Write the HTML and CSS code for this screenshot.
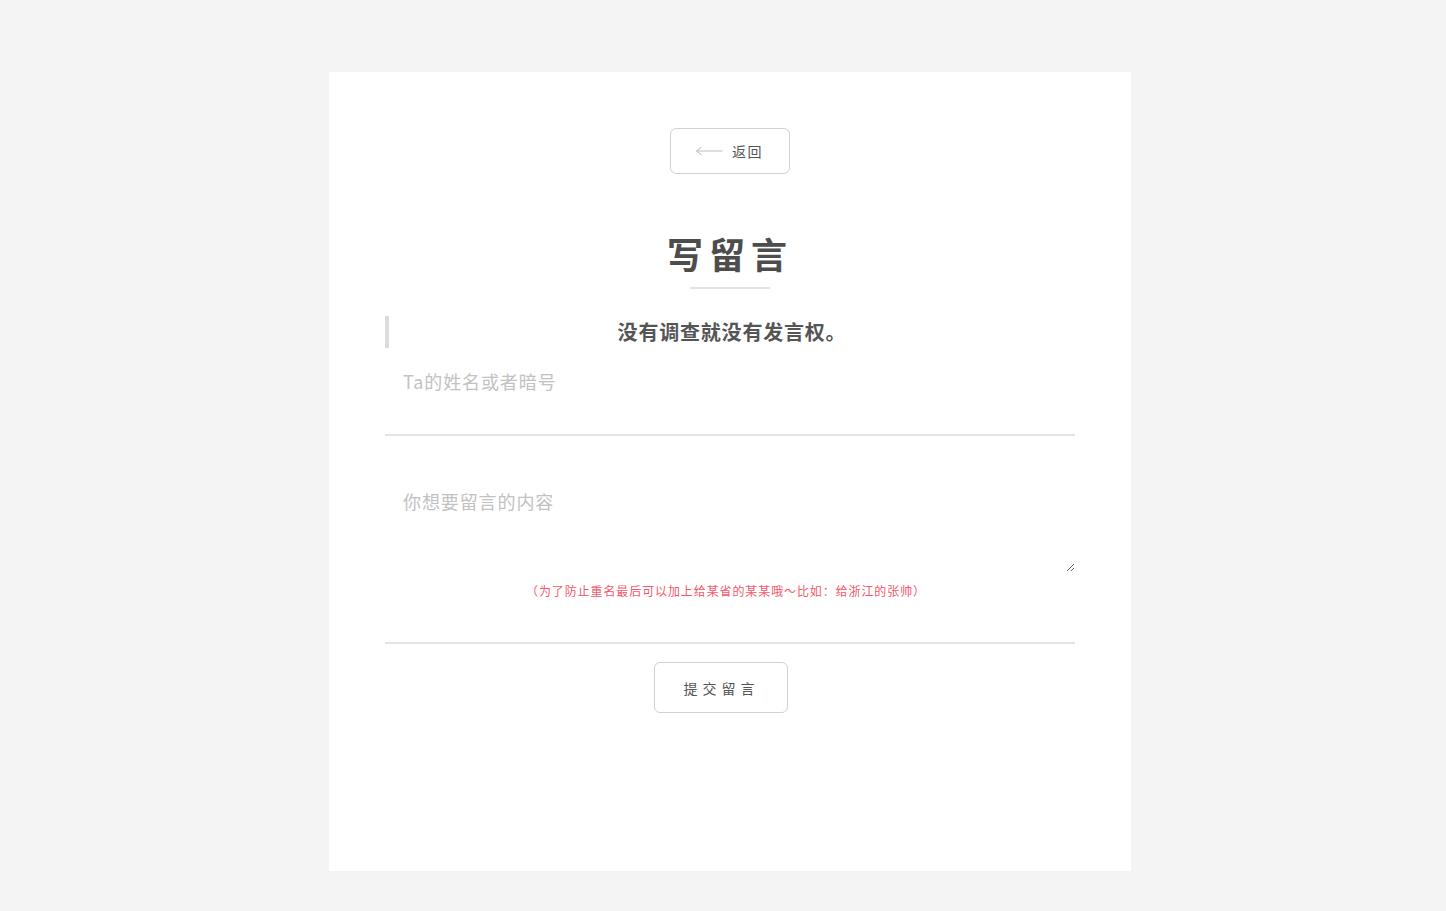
FILE: index.html
```html
<!DOCTYPE html>
<html lang="zh-CN">
<head>
<meta charset="utf-8">
<title>写留言</title>
<link rel="stylesheet" href="styles.css">
</head>
<body>
<div class="page">
  <div class="card">
    <div class="back-row">
      <a class="back-btn" href="#">
        <svg class="arrow" width="28" height="10" viewBox="0 0 28 10"><path d="M27.5 5H1.5M6.5 1.2L1.5 5L6.5 8.8" fill="none" stroke="#bdbdbd" stroke-width="1"/></svg>
        <span class="back-text">返回</span>
      </a>
    </div>
    <h1 class="title">写留言</h1>
    <div class="title-line"></div>
    <blockquote class="quote">没有调查就没有发言权。</blockquote>
    <form class="form">
      <input class="name-input" type="text" placeholder="Ta的姓名或者暗号">
      <div class="content-wrap">
        <textarea class="content-input" placeholder="你想要留言的内容"></textarea>
        <p class="hint">（为了防止重名最后可以加上给某省的某某哦～比如：给浙江的张帅）</p>
      </div>
      <div class="submit-row">
        <button class="submit-btn" type="button">提交留言</button>
      </div>
    </form>
  </div>
</div>
</body>
</html>
```
FILE: styles.css
```css
html, body {
  margin: 0;
  padding: 0;
  background: #f4f4f4;
  font-family: "Noto Sans CJK SC", "Noto Sans", sans-serif;
  color: #555;
}
.page {
  padding: 72px 0 0 329px;
}
.card {
  width: 802px;
  height: 799px;
  box-sizing: border-box;
  background: #fff;
  padding: 56px 56px 0 56px;
}
.back-row {
  display: flex;
  justify-content: center;
}
.back-btn {
  display: flex;
  align-items: center;
  justify-content: center;
  width: 120px;
  height: 46px;
  box-sizing: border-box;
  border: 1px solid #d2d2d2;
  border-radius: 6px;
  text-decoration: none;
  color: #555;
  padding-right: 2px;
}
.arrow {
  display: block;
  margin-right: 9px;
}
.back-text {
  font-size: 14px;
  letter-spacing: 1.5px;
  line-height: 20px;
}
.title {
  margin: 57px 0 0 0;
  text-align: center;
  font-size: 36px;
  line-height: 44px;
  font-weight: 700;
  letter-spacing: 6px;
  color: #4d4d4d;
  padding-left: 0;
}
.title-line {
  width: 80px;
  height: 2px;
  background: #e2e2e2;
  margin: 12px auto 0;
}
.quote {
  margin: 27px 0 0 0;
  border-left: 4px solid #dcdcdc;
  height: 32px;
  line-height: 32px;
  text-align: center;
  font-size: 20px;
  font-weight: 700;
  letter-spacing: 0.8px;
  color: #555;
  padding: 0;
}
.form {
  margin: 0;
}
.name-input {
  display: block;
  width: 100%;
  height: 76px;
  box-sizing: border-box;
  margin-top: 12px;
  border: none;
  border-bottom: 2px solid #e4e4e4;
  padding: 10px 18px 42px;
  line-height: 24px;
  font-size: 18px;
  font-family: inherit;
  color: #555;
  outline: none;
  background: transparent;
}
.name-input::placeholder,
.content-input::placeholder {
  color: #c2c2c2;
  letter-spacing: 0.9px;
}
.content-wrap {
  border-bottom: 2px solid #e4e4e4;
  padding-bottom: 42px;
}
.content-input {
  display: block;
  width: 100%;
  height: 107px;
  box-sizing: border-box;
  margin-top: 29px;
  border: none;
  padding: 24px 18px;
  line-height: 24px;
  font-size: 18px;
  font-family: inherit;
  color: #555;
  outline: none;
  background: transparent;
}
.hint {
  margin: 10px 0 0 0;
  padding-right: 8px;
  text-align: center;
  font-size: 12px;
  line-height: 18px;
  letter-spacing: 0.9px;
  color: #f5576c;
}
.submit-row {
  display: flex;
  justify-content: center;
  margin-top: 18px;
}
.submit-btn {
  height: 51px;
  box-sizing: border-box;
  padding: 0 27px 0 29px;
  margin-right: 19px;
  border: 1px solid #d2d2d2;
  border-radius: 6px;
  background: #fff;
  font-family: inherit;
  font-size: 14px;
  letter-spacing: 5px;
  color: #555;
  cursor: pointer;
}
```
